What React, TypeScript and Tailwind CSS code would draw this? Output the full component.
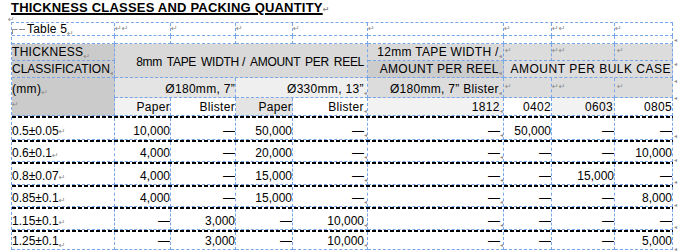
import React from "react";

const BL = "border-dashed border-[#79a6e8]";
const GRAY = "text-[#8c8c8c]";

const P = () => (
  <span className={`font-['DejaVu_Sans',sans-serif] text-[8px] leading-none ${GRAY}`}>↵</span>
);
const M = () => (
  <span className={`font-['DejaVu_Sans',sans-serif] text-[6px] leading-none ${GRAY}`}>◂</span>
);

function C({ className = "", children }: { className?: string; children?: React.ReactNode }) {
  return <div className={`border-r border-b ${BL} overflow-hidden whitespace-nowrap ${className}`}>{children}</div>;
}

const Black = () => (
  <div className="col-span-9 bg-[image:repeating-linear-gradient(90deg,#000_0_4px,transparent_4px_6px)]" />
);

const data: string[][] = [
  ["0.5±0.05", "10,000", "—", "50,000", "—", "—", "50,000", "—", "—"],
  ["0.6±0.1", "4,000", "—", "20,000", "—", "—", "—", "—", "10,000"],
  ["0.8±0.07", "4,000", "—", "15,000", "—", "—", "—", "15,000", "—"],
  ["0.85±0.1", "4,000", "—", "15,000", "—", "—", "—", "—", "8,000"],
  ["1.15±0.1", "—", "3,000", "—", "10,000", "—", "—", "—", "—"],
  ["1.25±0.1", "—", "3,000", "—", "10,000", "—", "—", "—", "5,000"],
];

const H = "text-[12px] leading-[14px] tracking-[0.3px]";
const CELL = "flex items-end pb-[1px] text-[12px] leading-[14px]";

export default function App() {
  return (
    <div className="w-[679px] h-[251px] overflow-hidden bg-white text-black font-['Liberation_Sans',Arial,sans-serif]">
      <div className="h-[15px] pl-[11px] text-[13px] leading-[15px] font-bold whitespace-nowrap">
        <span className="underline decoration-[1.5px] underline-offset-[1px] tracking-[0.2px]">
          THICKNESS CLASSES AND PACKING QUANTITY
        </span>
        <P />
      </div>
      <div className="h-[7px] pl-[8px] leading-[4px]">
        <P />
      </div>
      <div className="flex ml-[11px]">
        <div
          className={`grid w-[662px] grid-cols-[103px_56px_65px_57px_75px_136px_48px_63px_58px] grid-rows-[13px_8px_17px_17px_20px_18px_2px_22px_2px_20px_2px_21px_2px_20px_2px_21px_2px_18px] border-l border-t ${BL}`}
        >
          {/* Row A1 */}
          <div className={`border-r border-b ${BL} whitespace-nowrap flex items-end text-[12px] leading-[12px]`}>
            <svg width="15" height="12" viewBox="0 0 15 12" className="shrink-0">
              <path d="M0.5 11 V6.5 H5.5 M7 6.5 H13" stroke="#8c8c8c" strokeWidth="1" fill="none" />
            </svg>
            <span className="tracking-[0.2px]">Table 5</span>
            <span className="self-start pt-[3px]"><P /></span>
          </div>
          <C className="flex items-start pt-[2px]"><P /><P /></C>
          <C className="flex items-start pt-[2px]"><P /></C>
          <C className="flex items-start pt-[2px]"><P /></C>
          <C className="flex items-start pt-[2px]"><P /></C>
          <C className="flex items-start pt-[2px]"><P /></C>
          <C className="flex items-start pt-[2px]"><P /></C>
          <C className="flex items-start pt-[2px]"><P /><P /></C>
          <C className="flex items-start pt-[2px]"><P /></C>

          {/* Row A2 */}
          {Array.from({ length: 9 }).map((_, i) => (
            <C key={"a2" + i} />
          ))}

          {/* Row B */}
          <C className={`bg-[#cbcbcb] flex items-end pb-[1px] ${H}`}>
            <span>THICKNESS</span>
            <span className="self-start pt-[4px]"><P /></span>
          </C>
          <C className="col-span-4 row-span-2 bg-[#d9d9d9] flex items-center justify-end pr-[3px] pt-[3px] text-[12px] leading-[14px] tracking-[-0.3px]">
            <span className="[word-spacing:2px]">8mm TAPE WIDTH</span>
            <span>&nbsp;/ </span>
            <span className="[word-spacing:2px]">&nbsp;AMOUNT PER REEL</span>
          </C>
          <C className={`bg-[#d9d9d9] flex items-end justify-end pb-[1px] pr-[1px] ${H}`}>
            <span>12mm TAPE WIDTH /</span>
            <M />
          </C>
          <C className="bg-[#dcdcdc] flex items-start pt-[3px] pl-[1px]"><P /></C>
          <C className="bg-[#dcdcdc] flex items-start pt-[3px]"><P /><P /></C>
          <C className="bg-[#dcdcdc] flex items-start pt-[3px] pl-[2px]"><P /></C>

          {/* Row C */}
          <C className={`bg-[#cbcbcb] flex items-end pb-[1px] ${H} tracking-[0px]`}>
            <span>CLASSIFICATION</span>
            <M />
          </C>
          <C className={`bg-[#cccccc] flex items-end justify-end pb-[1px] pr-[1px] ${H}`}>
            <span>AMOUNT PER REEL</span>
            <M />
          </C>
          <C className={`col-span-3 bg-[#dcdcdc] flex items-end justify-end pb-[1px] pr-[1px] ${H} tracking-[0.5px]`}>
            <span>AMOUNT PER BULK CASE</span>
          </C>

          {/* Row D */}
          <C className={`bg-[#cbcbcb] border-b-0 flex items-end pb-[2px] ${H}`}>
            <span>(mm)</span>
            <span className="self-start pt-[6px]"><P /></span>
          </C>
          <C className={`col-span-2 bg-[#e4e4e4] flex items-end justify-end pb-[1px] ${H}`}>
            <span>Ø180mm, 7”</span>
          </C>
          <C className={`col-span-2 bg-[#efefef] flex items-end justify-end pb-[1px] ${H}`}>
            <span>Ø330mm, 13”</span>
            <M />
          </C>
          <C className={`bg-[#dcdcdc] flex items-end justify-end pb-[1px] pr-[1px] ${H}`}>
            <span>Ø180mm, 7” Blister</span>
            <M />
          </C>
          <C className="bg-[#dcdcdc] flex items-start pt-[5px] pl-[1px]"><P /></C>
          <C className="bg-[#dcdcdc] flex items-start pt-[5px]"><P /><P /></C>
          <C className="bg-[#dcdcdc] flex items-start pt-[5px] pl-[2px]"><P /></C>

          {/* Row E */}
          <C className="bg-[#cbcbcb] flex items-start pt-[3px]"><P /></C>
          <C className={`bg-[#f2f2f2] flex items-end justify-end pb-[1px] ${H}`}>Paper</C>
          <C className={`bg-white flex items-end justify-end pb-[1px] ${H}`}>Blister</C>
          <C className={`bg-[#e4e4e4] flex items-end justify-end pb-[1px] ${H}`}>Paper</C>
          <C className={`bg-white flex items-end justify-end pb-[1px] ${H}`}>
            <span>Blister</span>
            <M />
          </C>
          <C className={`bg-[#f2f2f2] flex items-end justify-end pb-[1px] ${H}`}>
            <span>1812</span>
            <M />
          </C>
          <C className={`bg-white flex items-end justify-end pb-[1px] ${H}`}>0402</C>
          <C className={`bg-[#f2f2f2] flex items-end justify-end pb-[1px] pr-[1px] ${H}`}>0603</C>
          <C className={`bg-white flex items-end justify-end pb-[1px] ${H}`}>0805</C>

          {data.map((row, r) => (
            <React.Fragment key={r}>
              <Black />
              {row.map((v, i) =>
                i === 0 ? (
                  <C key={i} className={CELL}>
                    <span>{v}</span>
                    <span className="self-start pt-[5px]"><P /></span>
                  </C>
                ) : (
                  <C key={i} className={`${CELL} justify-end`}>
                    <span>{v}</span>
                    {i === 4 || i === 5 ? <M /> : null}
                  </C>
                )
              )}
            </React.Fragment>
          ))}
        </div>
        <div className="grid w-[7px] grid-rows-[1px_13px_8px_17px_17px_20px_18px_2px_22px_2px_20px_2px_21px_2px_20px_2px_21px_2px_18px] pl-[1px]">
          <div />
          <div className="pt-[2px]"><M /></div>
          <div />
          <div className="pt-[5px]"><M /></div>
          <div className="pt-[5px]"><M /></div>
          <div className="pt-[5px]"><M /></div>
          <div />
          <div />
          <div className="pt-[3px]"><M /></div>
          <div />
          <div className="pt-[3px]"><M /></div>
          <div />
          <div className="pt-[3px]"><M /></div>
          <div />
          <div className="pt-[3px]"><M /></div>
          <div />
          <div className="pt-[3px]"><M /></div>
          <div />
          <div className="pt-[2px]"><M /></div>
        </div>
      </div>
    </div>
  );
}
